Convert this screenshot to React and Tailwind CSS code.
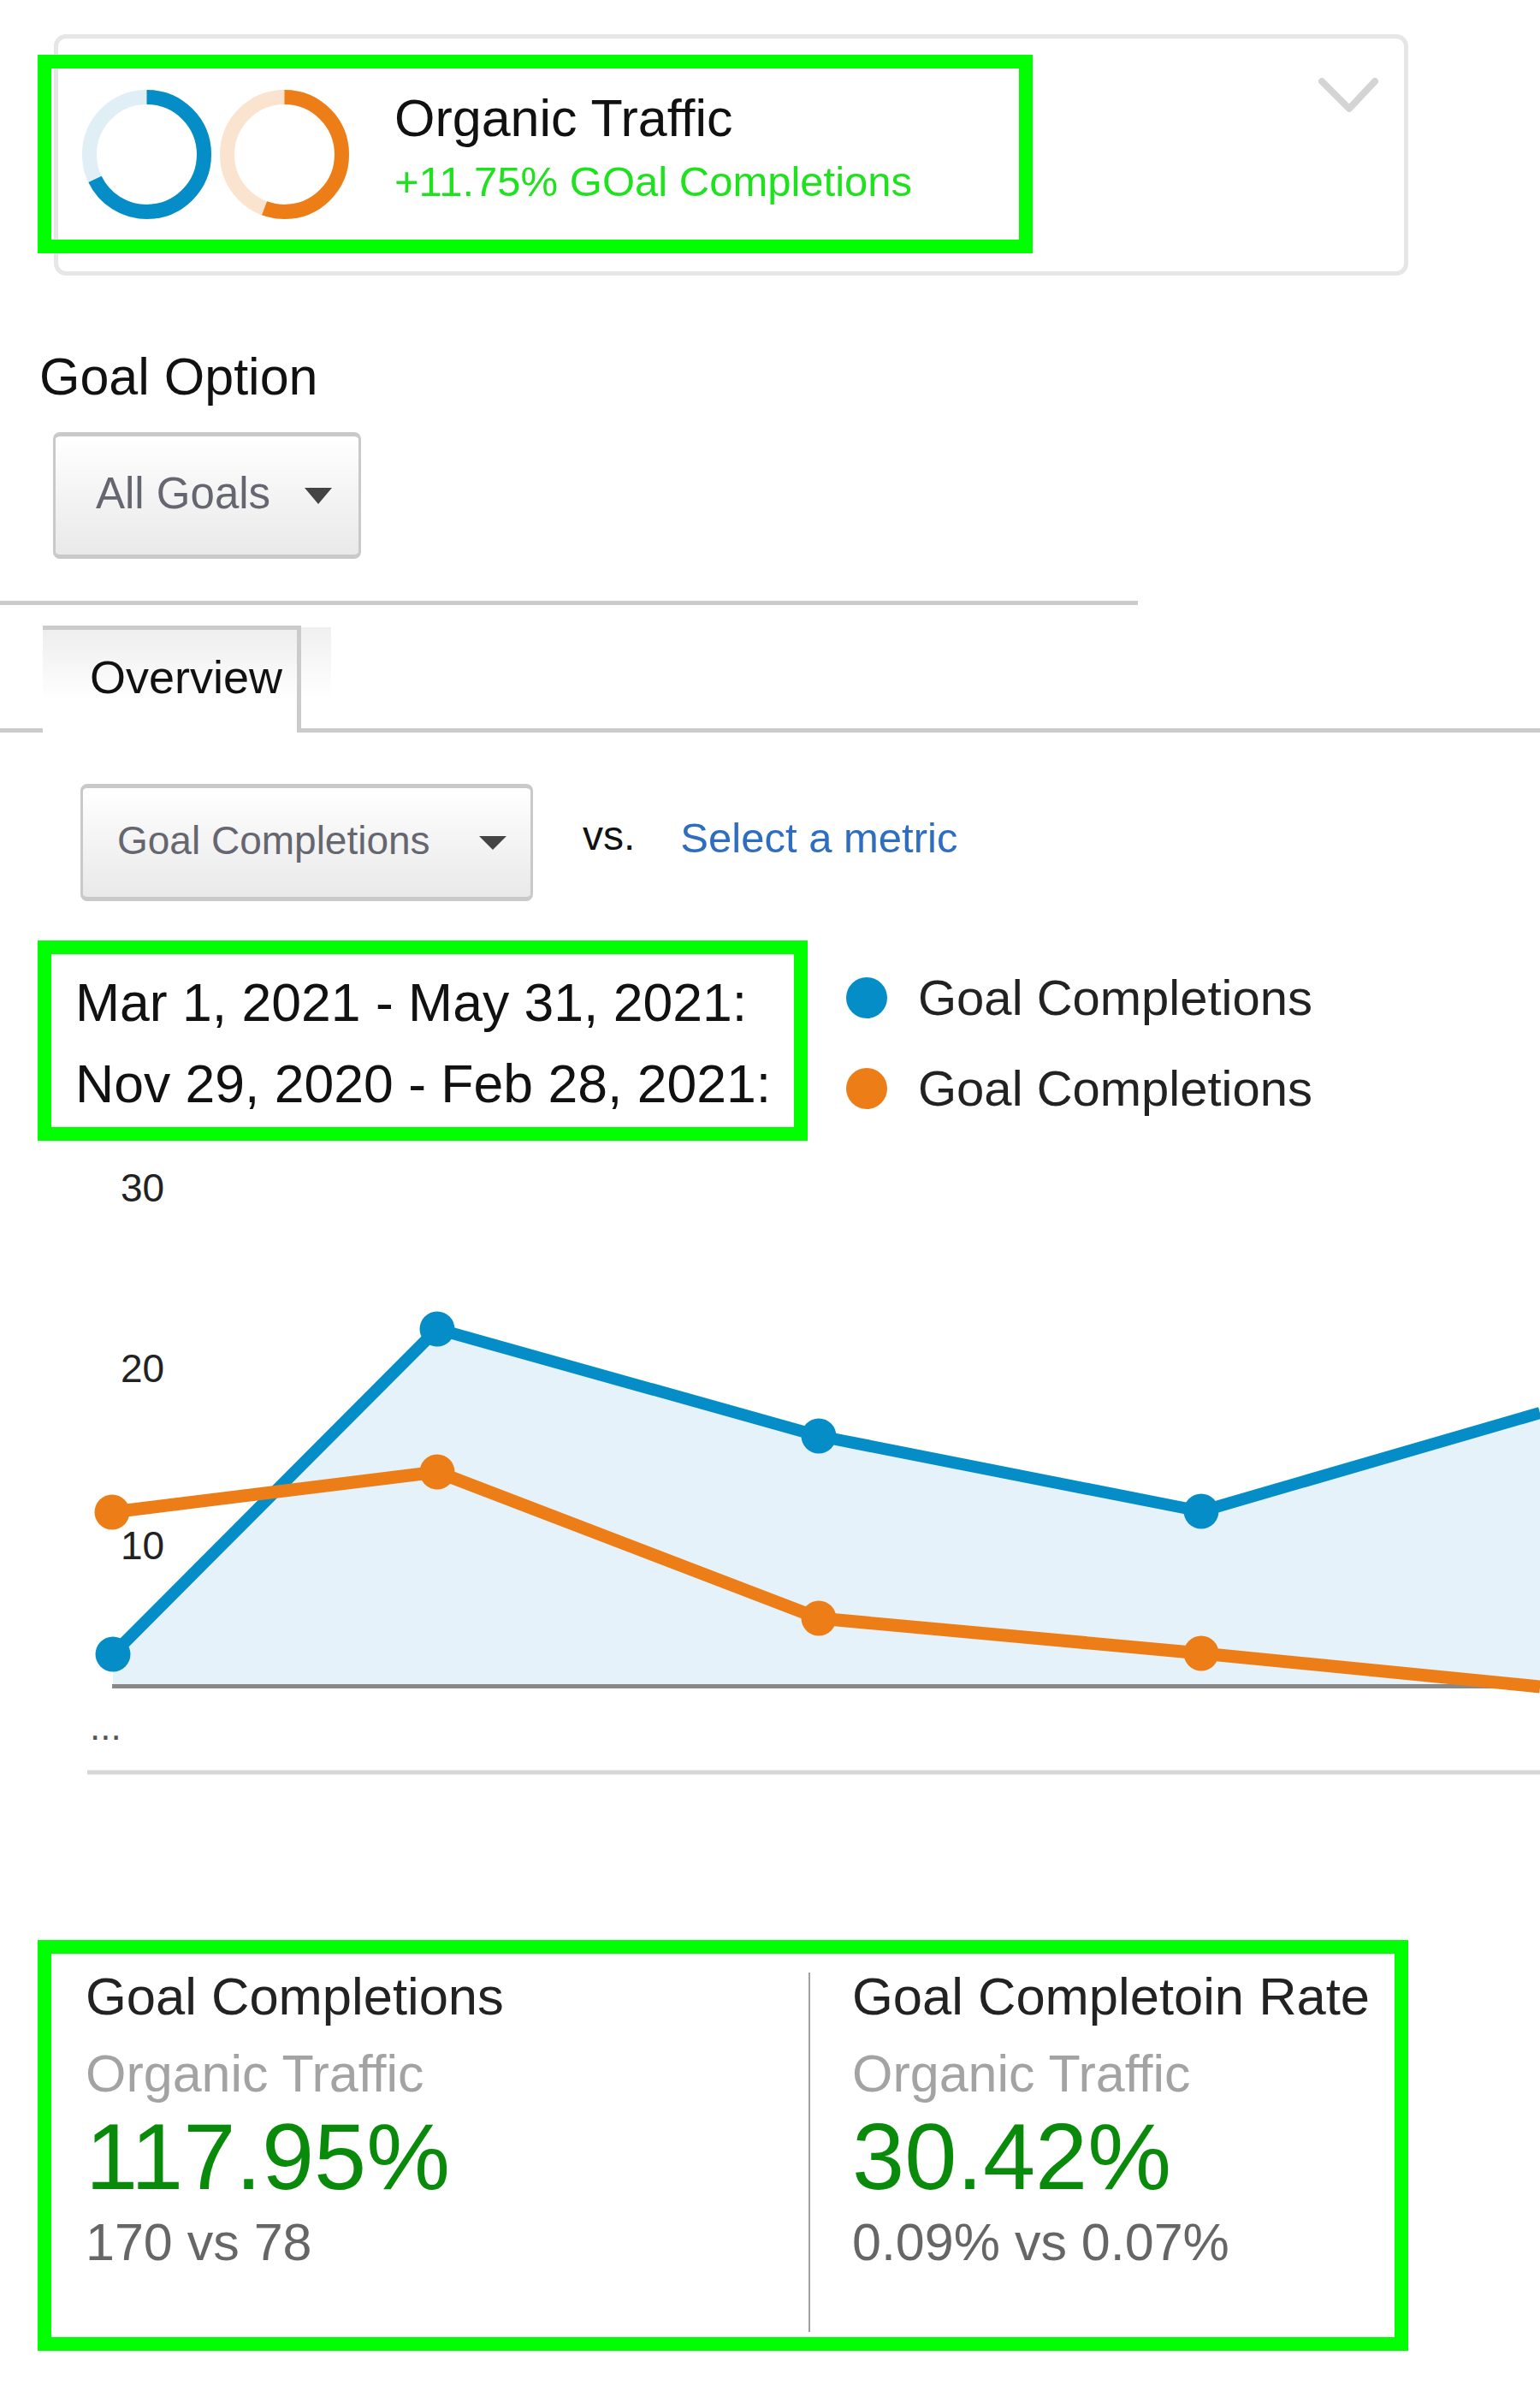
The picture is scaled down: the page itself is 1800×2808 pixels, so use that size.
const BLUE = "#058dc7";
const ORANGE = "#ed7e17";

const Donut = ({ color, track, fraction }) => {
  const r = 67;
  const c = 2 * Math.PI * r;
  return (
    <svg width="151" height="151" viewBox="0 0 151 151">
      <circle cx="75.5" cy="75.5" r={r} fill="none" stroke={track} strokeWidth="17" />
      <circle
        cx="75.5"
        cy="75.5"
        r={r}
        fill="none"
        stroke={color}
        strokeWidth="17"
        strokeDasharray={`${c * fraction} ${c}`}
        transform="rotate(-90 75.5 75.5)"
      />
    </svg>
  );
};

const Caret = ({ h = 20 }) => (
  <svg width="32" height={h} viewBox={`0 0 32 ${h}`}>
    <polygon points={`0,0 32,0 16,${h}`} fill="#444" />
  </svg>
);

const blue = [[132, 600], [511, 220], [957, 345], [1404, 433], [1800, 318]];
const orange = [[131, 434], [511, 387], [957, 558], [1404, 599], [1800, 638]];
const pts = (arr) => arr.map((p) => p.join(",")).join(" ");

const Chart = () => (
  <svg width="1800" height="760" viewBox="0 0 1800 760" className="block">
    <polygon points={`${pts(blue)} 1800,636 132,636`} fill="#e5f2f9" />
    <line x1="131" y1="637.5" x2="1800" y2="637.5" stroke="#888" strokeWidth="5" />
    <polyline points={pts(blue)} fill="none" stroke={BLUE} strokeWidth="14" strokeLinejoin="round" />
    <polyline points={pts(orange)} fill="none" stroke={ORANGE} strokeWidth="15" strokeLinejoin="round" />
    {blue.slice(0, 4).map(([x, y], i) => (
      <circle key={"b" + i} cx={x} cy={y} r="20.5" fill={BLUE} />
    ))}
    {orange.slice(0, 4).map(([x, y], i) => (
      <circle key={"o" + i} cx={x} cy={y} r="20.5" fill={ORANGE} />
    ))}
    <g fontFamily="'Liberation Sans', Arial, sans-serif" fontSize="46" fill="#222">
      <text x="141" y="71">30</text>
      <text x="141" y="282">20</text>
      <text x="141" y="489">10</text>
    </g>
    <text x="105" y="700" fontFamily="'Liberation Sans', Arial, sans-serif" fontSize="44" fill="#555">...</text>
    <line x1="102" y1="738" x2="1800" y2="738" stroke="#d6d6d6" strokeWidth="5" />
  </svg>
);

const App = () => {
  return (
    <div className="w-[1800px] min-h-[2808px] bg-white pt-[40px] font-['Liberation_Sans',Arial,sans-serif] leading-none whitespace-nowrap">
      {/* top card */}
      <div className="ml-[63px] w-[1583px] h-[282px] border-[5px] border-[#e6e6e6] rounded-[14px] flex items-start">
        <div className="-ml-[24px] mt-[19px] w-[1163px] h-[232px] border-[16px] border-[#00ff00] flex items-start">
          <div className="ml-[36px] mt-[25px]">
            <Donut color={BLUE} track="#e0eef6" fraction={0.678} />
          </div>
          <div className="ml-[10px] mt-[25px]">
            <Donut color={ORANGE} track="#fbe4cf" fraction={0.556} />
          </div>
          <div className="ml-[53px] mt-[28px] flex flex-col">
            <span className="text-[61px] text-[#111]">Organic Traffic</span>
            <span className="mt-[19px] text-[49px] text-[#1ee21e]">+11.75% GOal Completions</span>
          </div>
        </div>
        <svg className="ml-auto mt-[46px] mr-[28px]" width="72" height="44" viewBox="0 0 72 44">
          <polyline points="4,4 36,36 66,4" fill="none" stroke="#d4d4d4" strokeWidth="8" strokeLinecap="round" strokeLinejoin="round" />
        </svg>
      </div>

      <h2 className="ml-[46px] mt-[88px] text-[61px] text-[#111]">Goal Option</h2>

      <button className="ml-[62px] mt-[34px] w-[360px] h-[148px] border-x-[3px] border-y-[5px] border-[#c9c9c9] rounded-[8px] bg-linear-to-b from-white to-[#e9e9e9] flex items-center pl-[47px] pb-[6px]">
        <span className="text-[51px] text-[#666670]">All Goals</span>
        <span className="ml-[40px] pt-[6px]">
          <Caret h={19} />
        </span>
      </button>

      <div className="mt-[49px] w-[1330px] h-[5px] bg-[#cbcbcb]" />

      {/* tabs */}
      <div className="mt-[24px] flex h-[125px]">
        <div className="w-[50px] h-[5px] self-end bg-[#cbcbcb]" />
        <div className="w-[302px] border-t-[5px] border-r-[5px] border-[#cbcbcb] bg-linear-to-b from-[#eeeeee] to-white to-70% pl-[55px] pt-[28px]">
          <span className="text-[54px] text-[#111]">Overview</span>
        </div>
        <div className="flex-1 border-b-[5px] border-[#cbcbcb]">
          <div className="mt-[2px] w-[35px] h-[84px] bg-linear-to-b from-[#f0f0f0] to-white" />
        </div>
      </div>

      {/* metric selector */}
      <div className="mt-[60px] ml-[94px] flex items-start">
        <button className="w-[529px] h-[137px] border-x-[3px] border-y-[5px] border-[#c9c9c9] rounded-[8px] bg-linear-to-b from-white to-[#e9e9e9] flex items-center justify-between pl-[40px] pr-[28px] pb-[5px]">
          <span className="text-[46px] text-[#666670]">Goal Completions</span>
          <span className="pt-[5px]">
            <Caret h={16} />
          </span>
        </button>
        <span className="ml-[58px] mt-[37px] text-[48px] text-[#111]">vs.</span>
        <span className="ml-[53px] mt-[39px] text-[49px] text-[#2e6dbf]">Select a metric</span>
      </div>

      {/* legend */}
      <div className="mt-[46px] ml-[44px] flex items-start">
        <div className="w-[900px] h-[234px] border-[16px] border-[#00ff00] pl-[28px] pt-[9px] text-[62.5px] leading-[95px] text-[#111]">
          <div>Mar 1, 2021 - May 31, 2021:</div>
          <div>Nov 29, 2020 - Feb 28, 2021:</div>
        </div>
        <div className="ml-[45px] mt-[37px] flex flex-col gap-[46px]">
          <div className="h-[60px] flex items-center">
            <span className="w-[48px] h-[48px] rounded-full bg-[#058dc7]" />
            <span className="ml-[36px] text-[58px] text-[#222]">Goal Completions</span>
          </div>
          <div className="h-[60px] flex items-center">
            <span className="w-[48px] h-[48px] rounded-full bg-[#ed7e17]" />
            <span className="ml-[36px] text-[58px] text-[#222]">Goal Completions</span>
          </div>
        </div>
      </div>

      <Chart />

      {/* summary */}
      <div className="mt-[174px] ml-[44px] w-[1602px] h-[480px] border-[16px] border-[#00ff00] flex items-start">
        <div className="w-[885px] pl-[40px] pt-[19px] flex flex-col">
          <span className="text-[61.5px] text-[#222]">Goal Completions</span>
          <span className="mt-[29px] text-[61px] text-[#a3a3a3]">Organic Traffic</span>
          <span className="mt-[11px] text-[110px] text-[#0a8a0a]">117.95%</span>
          <span className="mt-[15px] text-[61px] text-[#666]">170 vs 78</span>
        </div>
        <div className="mt-[22px] w-[2px] h-[420px] bg-[#a0a0a0]" />
        <div className="flex-1 pl-[49px] pt-[19px] flex flex-col">
          <span className="text-[61.5px] text-[#222]">Goal Completoin Rate</span>
          <span className="mt-[29px] text-[61px] text-[#a3a3a3]">Organic Traffic</span>
          <span className="mt-[11px] text-[110px] text-[#0a8a0a]">30.42%</span>
          <span className="mt-[15px] text-[61px] text-[#666]">0.09% vs 0.07%</span>
        </div>
      </div>
    </div>
  );
};

export default App;
